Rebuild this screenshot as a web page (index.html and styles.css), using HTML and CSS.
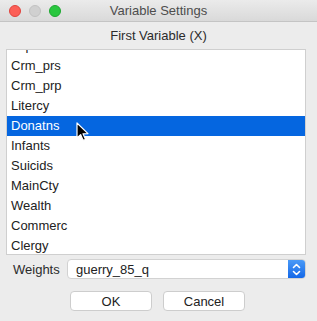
FILE: index.html
```html
<!DOCTYPE html>
<html lang="en">
<head>
  <meta charset="UTF-8" />
  <title>Variable Settings</title>
  <link rel="stylesheet" href="styles.css">
</head>
<body>
  <div class="window">
    <div class="titlebar">
      <div class="lights">
        <span class="light red"></span>
        <span class="light gray"></span>
        <span class="light green"></span>
      </div>
      <div class="title">Variable Settings</div>
    </div>

    <div class="heading">First Variable (X)</div>

    <div class="listbox">
      <div class="rows">
        <div class="row">dept</div>
        <div class="row">Crm_prs</div>
        <div class="row">Crm_prp</div>
        <div class="row">Litercy</div>
        <div class="row selected">Donatns</div>
        <div class="row">Infants</div>
        <div class="row">Suicids</div>
        <div class="row">MainCty</div>
        <div class="row">Wealth</div>
        <div class="row">Commerc</div>
        <div class="row">Clergy</div>
      </div>
    </div>

    <div class="weights">
      <span class="label">Weights</span>
      <div class="popup">
        <span class="popup-text">guerry_85_q</span>
        <span class="stepper">
          <svg width="9" height="13" viewBox="0 0 9 13">
            <path d="M1.5 4.5 L4.5 1.5 L7.5 4.5 M1.5 8.5 L4.5 11.5 L7.5 8.5" fill="none" stroke="#fff" stroke-width="1.6" stroke-linecap="round" stroke-linejoin="round"/>
          </svg>
        </span>
      </div>
    </div>

    <div class="buttons">
      <button class="btn">OK</button>
      <button class="btn">Cancel</button>
    </div>
  </div>

  <!-- mouse pointer over the list -->
  <svg class="cursor" width="14" height="20" viewBox="0 0 14 20">
    <path d="M1 1 L1 16 L4.6 12.6 L7.2 18.4 L9.6 17.4 L7 11.8 L12 11.6 Z" fill="#000" stroke="#fff" stroke-width="1.2" stroke-linejoin="round"/>
  </svg>
</body>
</html>
```

FILE: styles.css
```css
body {
  margin: 0;
  font-family: "Liberation Sans", Arial, sans-serif;
  font-size: 13px;
  color: #262626;
  background: #ececec;
}

.window {
  width: 317px;
  height: 321px;
  background: #ececec;
  display: flex;
  flex-direction: column;
}

.titlebar {
  position: relative;
  height: 22px;
  background: linear-gradient(#ebebeb, #d9d9d9);
  border-bottom: 1px solid #c4c4c4;
  box-sizing: border-box;
}
.lights {
  position: absolute;
  left: 9px;
  top: 5px;
  display: flex;
  gap: 8px;
}
.light {
  width: 12px;
  height: 12px;
  border-radius: 50%;
  box-sizing: border-box;
}
.red { background: #fc5f57; border: 1px solid #e0443e; }
.gray { background: #d0d0d0; border: 1px solid #c2c2c2; }
.green { background: #2ac73f; border: 1px solid #1ea831; }
.title {
  text-align: center;
  line-height: 22px;
  color: #4d4d4d;
}

.heading {
  text-align: center;
  margin-top: 5px;
  height: 20px;
  line-height: 18px;
  color: #2b2b2b;
}

.listbox {
  flex-shrink: 0;
  margin: 2px 11px 0 6px;
  height: 206px;
  background: #fff;
  border: 1px solid #cfcfcf;
  box-sizing: border-box;
  overflow: hidden;
}
.rows {
  margin-top: -14px;
}
.row {
  height: 20px;
  line-height: 20px;
  padding-left: 4px;
  color: #222;
}
.row.selected {
  background: #0566e0;
  color: #fff;
}

.weights {
  display: flex;
  align-items: center;
  margin: 4px 11px 0 13px;
  height: 20px;
}
.label {
  flex-shrink: 0;
  width: 54px;
  color: #2b2b2b;
}
.popup {
  flex: 1;
  height: 20px;
  display: flex;
  background: #fff;
  border: 1px solid #d2d2d2;
  border-radius: 4px;
  box-sizing: border-box;
  overflow: hidden;
}
.popup-text {
  flex: 1;
  padding-left: 8px;
  line-height: 19px;
  color: #222;
}
.stepper {
  width: 17px;
  background: linear-gradient(#4a9af7, #1468e8);
  display: flex;
  align-items: center;
  justify-content: center;
}

.buttons {
  display: flex;
  gap: 11px;
  margin: 12px 0 0 70px;
}
.btn {
  width: 82px;
  height: 20px;
  padding: 0;
  font-family: "Liberation Sans", Arial, sans-serif;
  font-size: 13px;
  color: #222;
  background: #fff;
  border: 1px solid #cdcdcd;
  border-radius: 4px;
}

.cursor {
  position: absolute;
  left: 76px;
  top: 122px;
}
```
